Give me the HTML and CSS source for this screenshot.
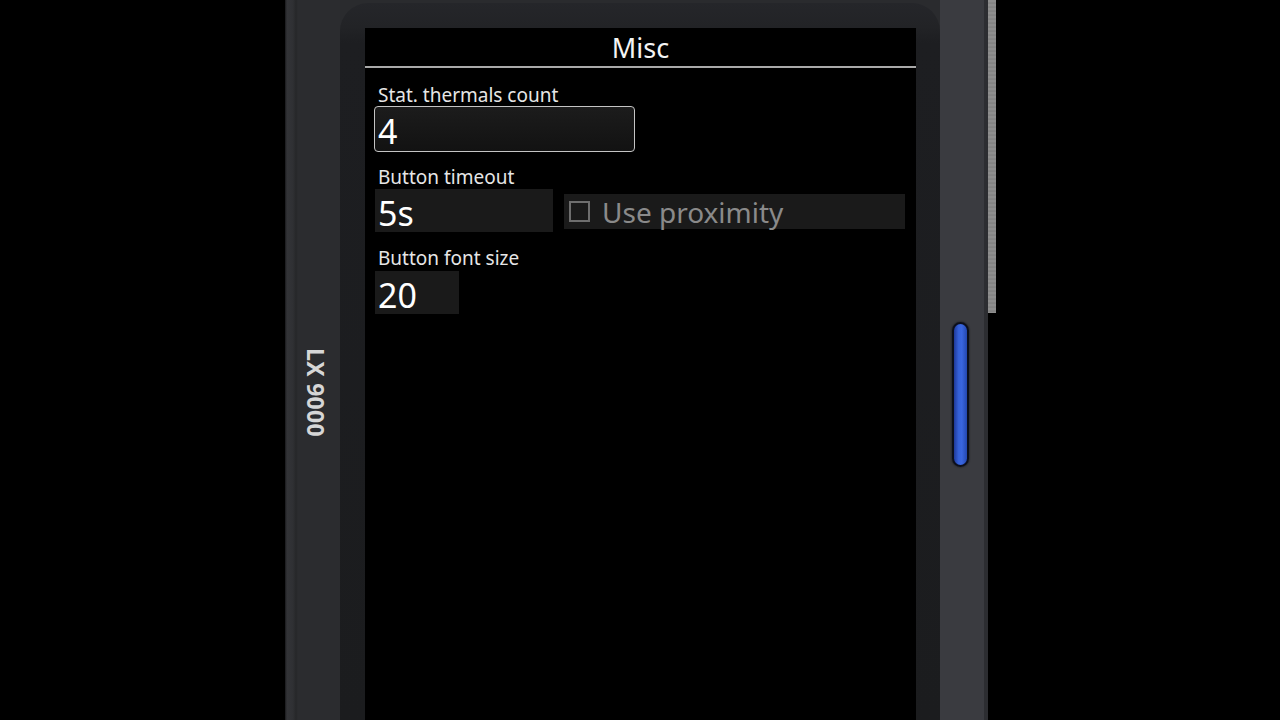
FILE: index.html
```html
<!DOCTYPE html>
<html lang="en">
<head>
<meta charset="utf-8">
<title>Misc</title>
<link rel="stylesheet" href="styles.css">
</head>
<body>
<div class="stage">
  <div class="device">
    <div class="rail-left"><span class="brand">LX 9000</span></div>
    <div class="bezel">
      <div class="screen">
        <div class="titlebar">Misc</div>
        <div class="form">
          <div class="field">
            <div class="label">Stat. thermals count</div>
            <div class="input framed w-count">4</div>
          </div>
          <div class="field">
            <div class="label">Button timeout</div>
            <div class="row">
              <div class="input w-timeout">5s</div>
              <div class="check">
                <span class="box"></span>
                <span class="check-text">Use proximity</span>
              </div>
            </div>
          </div>
          <div class="field field-last">
            <div class="label">Button font size</div>
            <div class="input w-font">20</div>
          </div>
        </div>
      </div>
    </div>
    <div class="rail-right"><div class="led"></div></div>
  </div>
  <div class="edge-strip"></div>
</div>
</body>
</html>
```

FILE: styles.css
```css
html, body {
  margin: 0;
  padding: 0;
  background: #000;
}
body {
  width: 1280px;
  height: 720px;
  overflow: hidden;
  font-family: "Noto Sans", "Open Sans", sans-serif;
}
.stage {
  display: flex;
  align-items: flex-start;
  padding-left: 285px;
  height: 720px;
}
.device {
  display: flex;
  width: 703px;
  height: 720px;
  background: #2a2b2e;
}
.rail-left {
  width: 55px;
  flex: none;
  display: flex;
  justify-content: center;
  padding-left: 7px;
  box-sizing: border-box;
  background: linear-gradient(to right, #19191b 0, #333438 2px, #2f3033 8px, #262729 11px, #2b2c2f 13px, #2b2c2f 100%);
}
.brand {
  writing-mode: vertical-rl;
  margin-top: 348px;
  font-size: 23px;
  font-weight: bold;
  color: #d6d6d6;
  letter-spacing: 0.3px;
  height: 90px;
  line-height: 24px;
}
.bezel {
  width: 600px;
  flex: none;
  margin-top: 3px;
  border-radius: 28px 28px 0 0;
  padding: 25px 24px 0 25px;
  box-sizing: border-box;
  background: linear-gradient(to bottom, #25262a 0, #222326 24px, #1d1e21 40px, #1b1c1e 100%);
  display: flex;
}
.screen {
  flex: 1;
  background: #000;
  display: flex;
  flex-direction: column;
}
.titlebar {
  height: 38px;
  line-height: 40px;
  text-align: center;
  font-size: 27px;
  color: #f4f4f4;
  border-bottom: 2px solid #a9a9a9;
}
.form {
  display: flex;
  flex-direction: column;
  gap: 12px;
  padding-top: 14px;
}
.field {
  display: flex;
  flex-direction: column;
}
.field-last {
  margin-top: 1px;
}
.label {
  font-size: 19px;
  line-height: 24px;
  color: #e6e6e6;
  padding-left: 13px;
  padding-top: 1px;
  margin-bottom: -1px;
}
.input {
  display: flex;
  align-items: center;
  box-sizing: border-box;
  height: 43px;
  margin-left: 10px;
  padding-left: 3px;
  padding-top: 5px;
  font-size: 34px;
  line-height: 1;
  color: #fff;
  background: #1a1a1a;
}
.field .input {
  margin-top: 1px;
}
.field-last .input {
  margin-top: 2px;
}
.input.framed {
  margin-top: 0;
  margin-left: 9px;
  height: 46px;
  padding-left: 3px;
  padding-top: 4px;
  border: 1.5px solid #c4c4c4;
  border-radius: 4px;
  background: linear-gradient(to bottom, #1c1c1c 0, #121212 100%);
}
.w-count { width: 261px; }
.w-timeout { width: 178px; }
.w-font { width: 84px; }
.row {
  display: flex;
  align-items: center;
}
.check {
  display: flex;
  align-items: center;
  margin-left: 11px;
  width: 341px;
  height: 35px;
  margin-top: 2px;
  padding-left: 5px;
  box-sizing: border-box;
  background: #1a1a1a;
  gap: 12px;
}
.box {
  width: 21px;
  height: 21px;
  box-sizing: border-box;
  border: 2px solid #6e6e6e;
}
.check-text {
  font-size: 28px;
  color: #8a8a8a;
  line-height: 1;
  padding-top: 2px;
}
.rail-right {
  width: 48px;
  flex: none;
  box-sizing: border-box;
  border-right: 4px solid #2c2d31;
  background: #3a3b40;
  padding-left: 12px;
  padding-top: 322px;
}
.led {
  width: 17px;
  height: 145px;
  box-sizing: border-box;
  border-radius: 9px;
  border: 2px solid #0c0f1c;
  background: linear-gradient(to right, #1f3a9a 0, #3560d8 35%, #3a66df 60%, #2347b0 100%);
  box-shadow: 0 0 2px #111;
}
.edge-strip {
  width: 8px;
  height: 313px;
  flex: none;
  background: repeating-linear-gradient(to bottom, #8e8e8e 0, #8e8e8e 2px, #7e7e7e 3px, #8a8a8a 4px);
}
```
